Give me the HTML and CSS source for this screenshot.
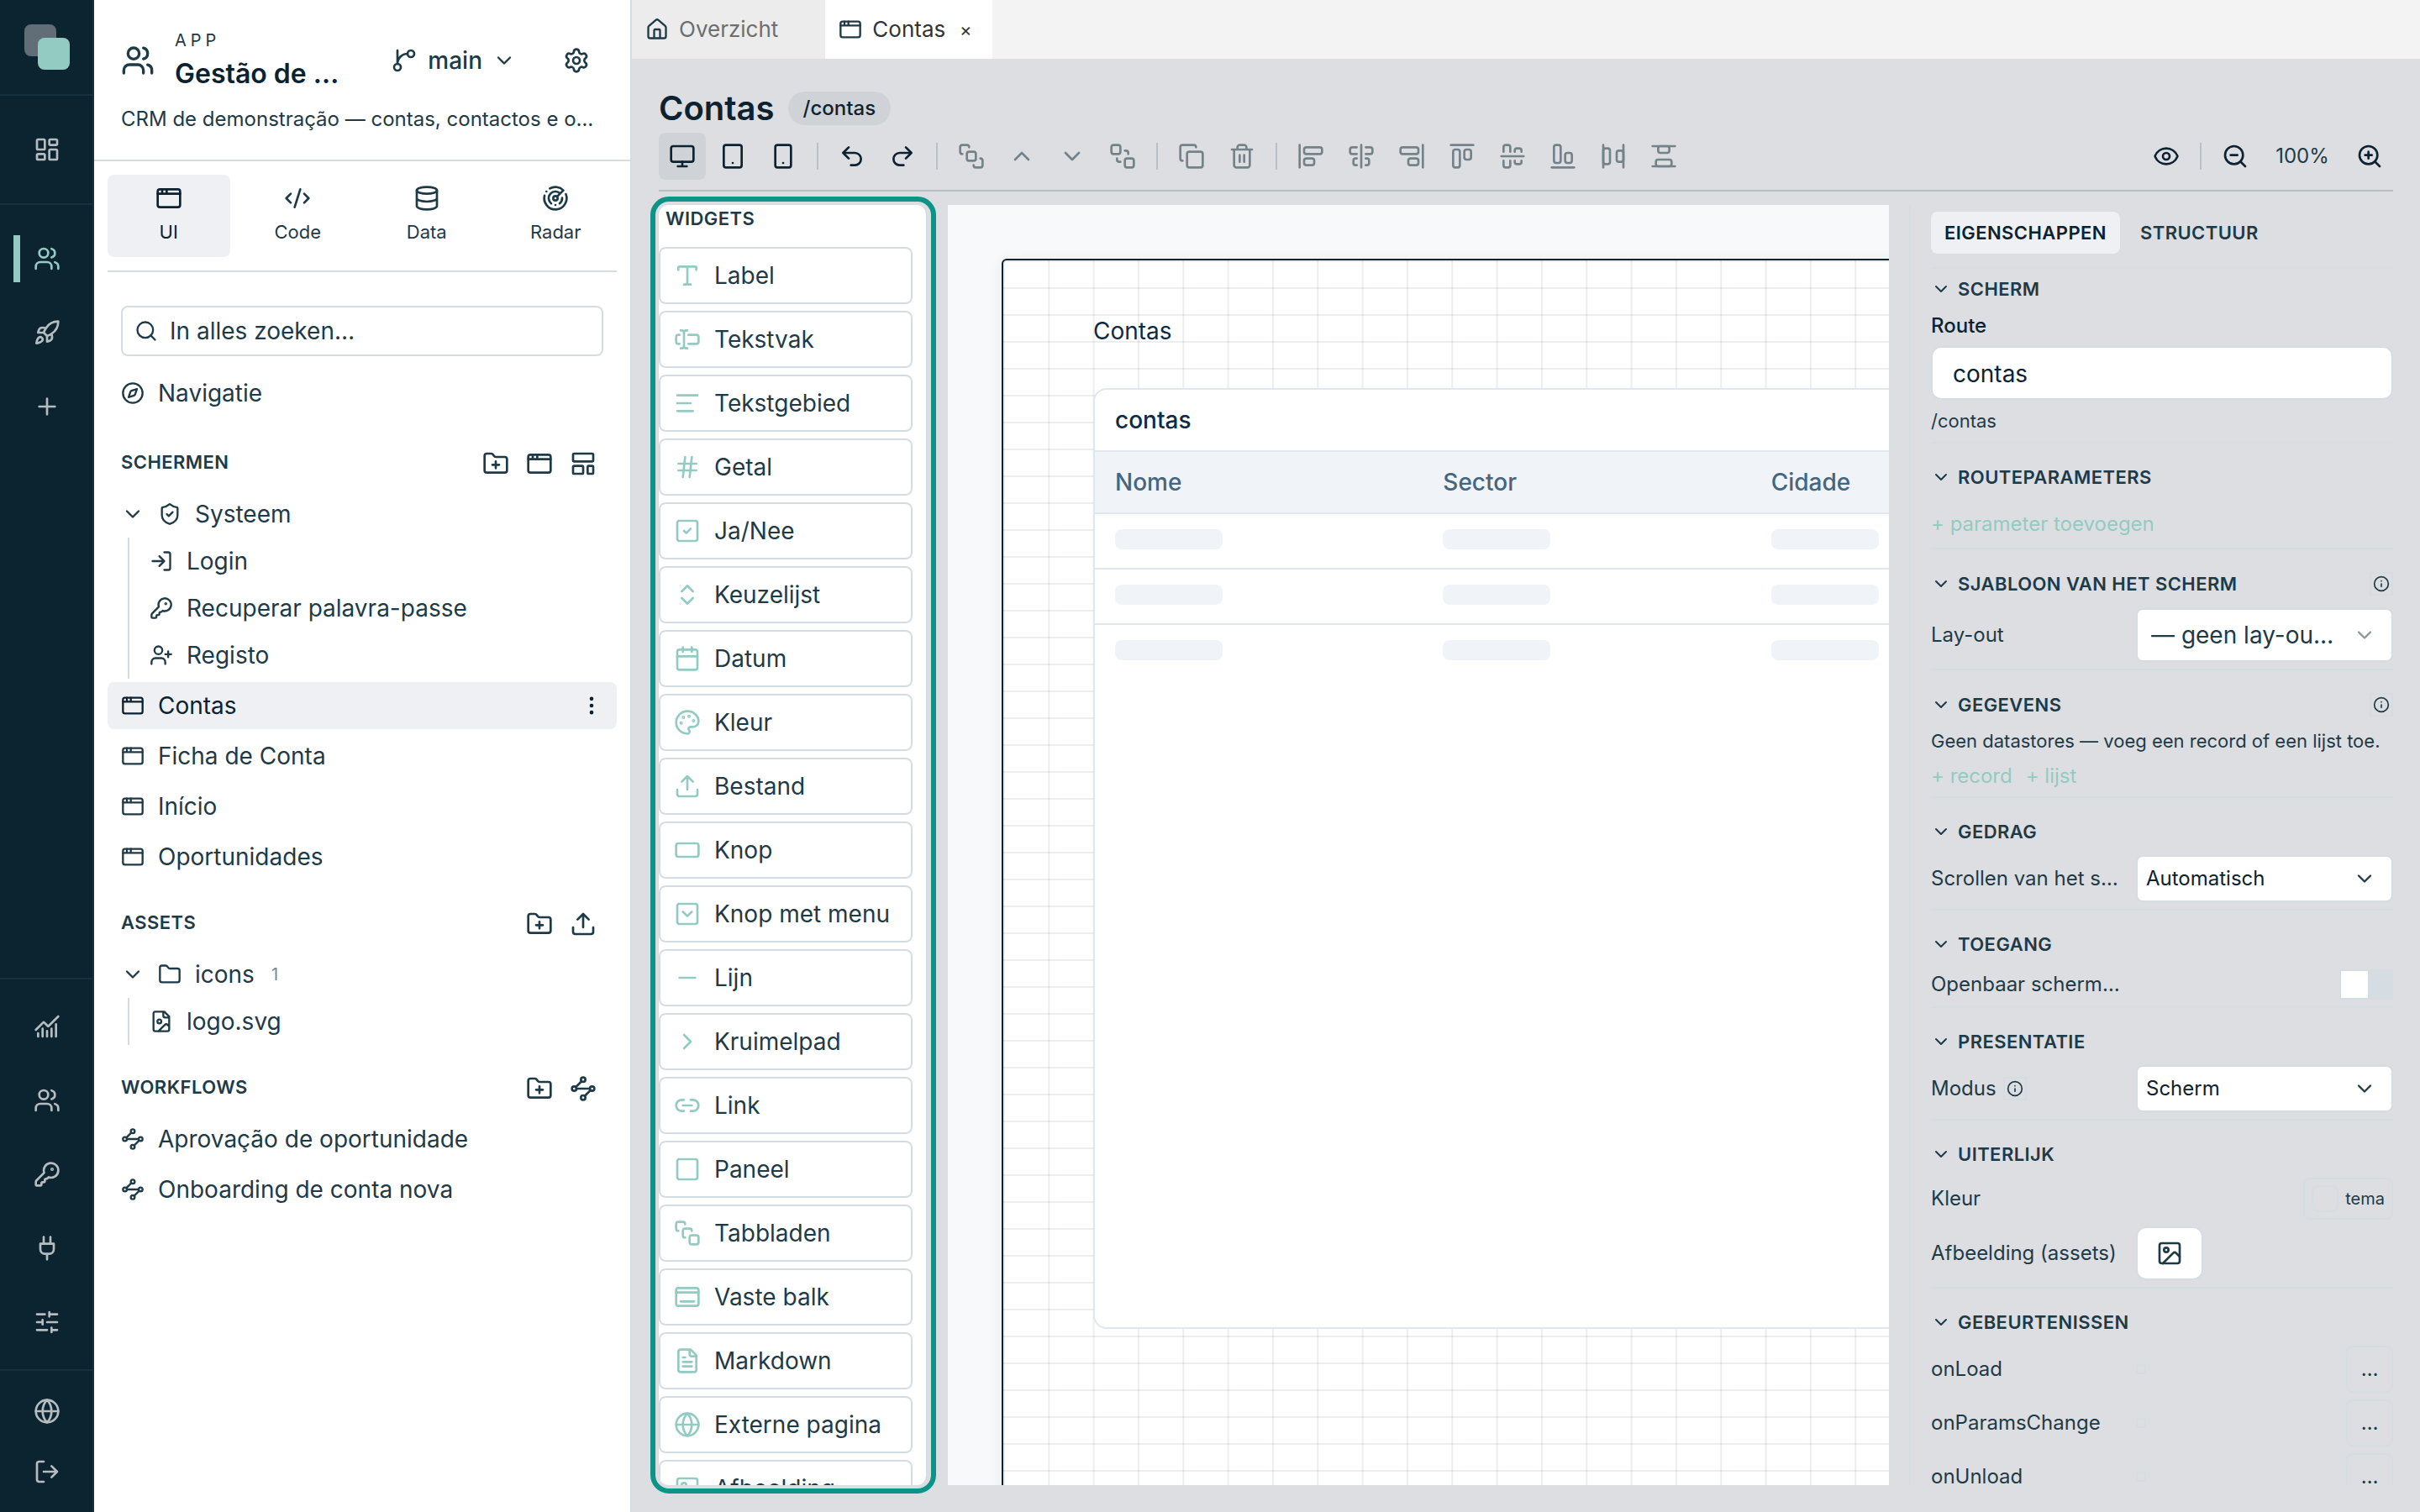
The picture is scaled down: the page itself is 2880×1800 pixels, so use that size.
FILE: index.html
```html
<!DOCTYPE html>
<html lang="nl">
<head>
<meta charset="UTF-8">
<meta name="viewport" content="width=device-width, initial-scale=1.0">
<title>Contas</title>
<link rel="stylesheet" href="styles.css">
</head>
<body>
<svg class="sprite" aria-hidden="true">
    <symbol id="i-dashboard" viewBox="0 0 24 24"><rect x="3" y="3" width="7" height="9" rx="1"/><rect x="14" y="3" width="7" height="5" rx="1"/><rect x="14" y="12" width="7" height="9" rx="1"/><rect x="3" y="16" width="7" height="5" rx="1"/></symbol>
    <symbol id="i-users" viewBox="0 0 24 24"><path d="M16 21v-2a4 4 0 0 0-4-4H6a4 4 0 0 0-4 4v2M16 3.128a4 4 0 0 1 0 7.744M22 21v-2a4 4 0 0 0-3-3.87"/><circle cx="9" cy="7" r="4"/></symbol>
    <symbol id="i-rocket" viewBox="0 0 24 24"><path d="M12 15v5s3.03-.55 4-2c1.08-1.62 0-5 0-5M4.5 16.5c-1.5 1.26-2 5-2 5s3.74-.5 5-2c.71-.84.7-2.13-.09-2.91a2.18 2.18 0 0 0-2.91-.09M9 12a22 22 0 0 1 2-3.95A12.88 12.88 0 0 1 22 2c0 2.72-.78 7.5-6 11a22.4 22.4 0 0 1-4 2zM9 12H4s.55-3.03 2-4c1.62-1.08 5 .05 5 .05"/></symbol>
    <symbol id="i-plus" viewBox="0 0 24 24"><path d="M5 12h14M12 5v14"/></symbol>
    <symbol id="i-chart" viewBox="0 0 24 24"><path d="M12 16v5M16 14v7M20 10v11M22 3l-8.646 8.646a.5.5 0 0 1-.708 0L9.354 8.354a.5.5 0 0 0-.707 0L2 15M4 18v3M8 14v7"/></symbol>
    <symbol id="i-key" viewBox="0 0 24 24"><path d="M2.586 17.414A2 2 0 0 0 2 18.828V21a1 1 0 0 0 1 1h3a1 1 0 0 0 1-1v-1a1 1 0 0 1 1-1h1a1 1 0 0 0 1-1v-1a1 1 0 0 1 1-1h.172a2 2 0 0 0 1.414-.586l.814-.814a6.5 6.5 0 1 0-4-4z"/><circle cx="16.5" cy="7.5" r=".5" fill="currentColor"/></symbol>
    <symbol id="i-plug" viewBox="0 0 24 24"><path d="M12 22v-5M9 8V2M15 8V2M18 8v5a4 4 0 0 1-4 4h-4a4 4 0 0 1-4-4V8Z"/></symbol>
    <symbol id="i-sliders" viewBox="0 0 24 24"><path d="M10 5H3M12 19H3M14 3v4M16 17v4M21 12h-9M21 19h-5M21 5h-7M8 10v4M8 12H3"/></symbol>
    <symbol id="i-globe" viewBox="0 0 24 24"><circle cx="12" cy="12" r="10"/><path d="M12 2a14.5 14.5 0 0 0 0 20 14.5 14.5 0 0 0 0-20M2 12h20"/></symbol>
    <symbol id="i-logout" viewBox="0 0 24 24"><path d="m16 17 5-5-5-5M21 12H9M9 21H5a2 2 0 0 1-2-2V5a2 2 0 0 1 2-2h4"/></symbol>
    <symbol id="i-login" viewBox="0 0 24 24"><path d="m10 17 5-5-5-5M15 12H3M15 3h4a2 2 0 0 1 2 2v14a2 2 0 0 1-2 2h-4"/></symbol>
    <symbol id="i-branch" viewBox="0 0 24 24"><path d="M15 6a9 9 0 0 0-9 9V3"/><circle cx="18" cy="6" r="3"/><circle cx="6" cy="18" r="3"/></symbol>
    <symbol id="i-down" viewBox="0 0 24 24"><path d="m6 9 6 6 6-6"/></symbol>
    <symbol id="i-up" viewBox="0 0 24 24"><path d="m18 15-6-6-6 6"/></symbol>
    <symbol id="i-right" viewBox="0 0 24 24"><path d="m9 18 6-6-6-6"/></symbol>
    <symbol id="i-settings" viewBox="0 0 24 24"><path d="M9.671 4.136a2.34 2.34 0 0 1 4.659 0 2.34 2.34 0 0 0 3.319 1.915 2.34 2.34 0 0 1 2.33 4.033 2.34 2.34 0 0 0 0 3.831 2.34 2.34 0 0 1-2.33 4.033 2.34 2.34 0 0 0-3.319 1.915 2.34 2.34 0 0 1-4.659 0 2.34 2.34 0 0 0-3.32-1.915 2.34 2.34 0 0 1-2.33-4.033 2.34 2.34 0 0 0 0-3.831A2.34 2.34 0 0 1 6.35 6.051a2.34 2.34 0 0 0 3.319-1.915"/><circle cx="12" cy="12" r="3"/></symbol>
    <symbol id="i-window" viewBox="0 0 24 24"><rect x="2" y="4" width="20" height="16" rx="2"/><path d="M10 4v4M2 8h20M6 4v4"/></symbol>
    <symbol id="i-code" viewBox="0 0 24 24"><path d="m18 16 4-4-4-4M6 8l-4 4 4 4M14.5 4l-5 16"/></symbol>
    <symbol id="i-database" viewBox="0 0 24 24"><ellipse cx="12" cy="5" rx="9" ry="3"/><path d="M3 5V19A9 3 0 0 0 21 19V5M3 12A9 3 0 0 0 21 12"/></symbol>
    <symbol id="i-radar" viewBox="0 0 24 24"><path d="M19.07 4.93A10 10 0 0 0 6.99 3.34M4 6h.01M2.29 9.62A10 10 0 1 0 21.31 8.35M16.24 7.76A6 6 0 1 0 8.23 16.67M12 18h.01M17.99 11.66A6 6 0 0 1 15.77 16.67M13.41 10.59l5.66-5.66"/><circle cx="12" cy="12" r="2"/></symbol>
    <symbol id="i-search" viewBox="0 0 24 24"><circle cx="11" cy="11" r="8"/><path d="m21 21-4.34-4.34"/></symbol>
    <symbol id="i-compass" viewBox="0 0 24 24"><path d="m16.24 7.76-1.804 5.411a2 2 0 0 1-1.265 1.265L7.76 16.24l1.804-5.411a2 2 0 0 1 1.265-1.265z"/><circle cx="12" cy="12" r="10"/></symbol>
    <symbol id="i-folder" viewBox="0 0 24 24"><path d="M20 20a2 2 0 0 0 2-2V8a2 2 0 0 0-2-2h-7.9a2 2 0 0 1-1.69-.9L9.6 3.9A2 2 0 0 0 7.93 3H4a2 2 0 0 0-2 2v13a2 2 0 0 0 2 2Z"/></symbol>
    <symbol id="i-folder-plus" viewBox="0 0 24 24"><path d="M12 10v6M9 13h6M20 20a2 2 0 0 0 2-2V8a2 2 0 0 0-2-2h-7.9a2 2 0 0 1-1.69-.9L9.6 3.9A2 2 0 0 0 7.93 3H4a2 2 0 0 0-2 2v13a2 2 0 0 0 2 2Z"/></symbol>
    <symbol id="i-template" viewBox="0 0 24 24"><rect x="3" y="3" width="18" height="7" rx="1"/><rect x="3" y="14" width="9" height="7" rx="1"/><rect x="16" y="14" width="5" height="7" rx="1"/></symbol>
    <symbol id="i-shield" viewBox="0 0 24 24"><path d="M20 13c0 5-3.5 7.5-7.66 8.95a1 1 0 0 1-.67-.01C7.5 20.5 4 18 4 13V6a1 1 0 0 1 1-1c2 0 4.5-1.2 6.24-2.72a1.17 1.17 0 0 1 1.52 0C14.51 3.81 17 5 19 5a1 1 0 0 1 1 1zM9 12l2 2 4-4"/></symbol>
    <symbol id="i-user-plus" viewBox="0 0 24 24"><path d="M16 21v-2a4 4 0 0 0-4-4H6a4 4 0 0 0-4 4v2M19 8v6M22 11h-6"/><circle cx="9" cy="7" r="4"/></symbol>
    <symbol id="i-dots" viewBox="0 0 24 24"><g fill="currentColor"><circle cx="12" cy="12" r="1"/><circle cx="12" cy="5" r="1"/><circle cx="12" cy="19" r="1"/></g></symbol>
    <symbol id="i-file-image" viewBox="0 0 24 24"><path d="M15 2H6a2 2 0 0 0-2 2v16a2 2 0 0 0 2 2h12a2 2 0 0 0 2-2V7ZM14 2v4a2 2 0 0 0 2 2h4M20 17l-1.296-1.296a2.41 2.41 0 0 0-3.408 0L9 22"/><circle cx="10" cy="12" r="2"/></symbol>
    <symbol id="i-upload" viewBox="0 0 24 24"><path d="M12 3v12M17 8l-5-5-5 5M21 15v4a2 2 0 0 1-2 2H5a2 2 0 0 1-2-2v-4"/></symbol>
    <symbol id="i-flow" viewBox="0 0 24 24"><circle cx="12" cy="4" r="2"/><circle cx="4" cy="12" r="2"/><circle cx="20" cy="12" r="2"/><circle cx="12" cy="20" r="2"/><path d="m10.586 5.414-5.172 5.172M18.586 13.414l-5.172 5.172M6 12h12"/></symbol>
    <symbol id="i-home" viewBox="0 0 24 24"><path d="M15 21v-8a1 1 0 0 0-1-1h-4a1 1 0 0 0-1 1v8M3 10a2 2 0 0 1 .709-1.528l7-6a2 2 0 0 1 2.582 0l7 6A2 2 0 0 1 21 10v9a2 2 0 0 1-2 2H5a2 2 0 0 1-2-2z"/></symbol>
    <symbol id="i-monitor" viewBox="0 0 24 24"><rect x="2" y="3" width="20" height="14" rx="2"/><path d="M8 21h8M12 17v4"/></symbol>
    <symbol id="i-tablet" viewBox="0 0 24 24"><rect x="4" y="2" width="16" height="20" rx="2"/><path d="M12 18h.01"/></symbol>
    <symbol id="i-phone" viewBox="0 0 24 24"><rect x="5" y="2" width="14" height="20" rx="2"/><path d="M12 18h.01"/></symbol>
    <symbol id="i-undo" viewBox="0 0 24 24"><path d="M9 14 4 9l5-5M4 9h10.5a5.5 5.5 0 0 1 5.5 5.5a5.5 5.5 0 0 1-5.5 5.5H11"/></symbol>
    <symbol id="i-redo" viewBox="0 0 24 24"><path d="m15 14 5-5-5-5M20 9H9.5A5.5 5.5 0 0 0 4 14.5A5.5 5.5 0 0 0 9.5 20H13"/></symbol>
    <symbol id="i-front" viewBox="0 0 24 24"><rect x="8" y="8" width="8" height="8" rx="2"/><path d="M4 10a2 2 0 0 1-2-2V4a2 2 0 0 1 2-2h4a2 2 0 0 1 2 2M14 20a2 2 0 0 0 2 2h4a2 2 0 0 0 2-2v-4a2 2 0 0 0-2-2"/></symbol>
    <symbol id="i-back" viewBox="0 0 24 24"><rect x="14" y="14" width="8" height="8" rx="2"/><rect x="2" y="2" width="8" height="8" rx="2"/><path d="M7 14v1a2 2 0 0 0 2 2h1M14 7h1a2 2 0 0 1 2 2v1"/></symbol>
    <symbol id="i-copy" viewBox="0 0 24 24"><rect x="8" y="8" width="14" height="14" rx="2"/><path d="M4 16c-1.1 0-2-.9-2-2V4c0-1.1.9-2 2-2h10c1.1 0 2 .9 2 2"/></symbol>
    <symbol id="i-trash" viewBox="0 0 24 24"><path d="M3 6h18M19 6v14c0 1-1 2-2 2H7c-1 0-2-1-2-2V6M8 6V4c0-1 1-2 2-2h4c1 0 2 1 2 2v2M10 11v6M14 11v6"/></symbol>
    <symbol id="i-al-left" viewBox="0 0 24 24"><rect x="6" y="14" width="9" height="6" rx="2"/><rect x="6" y="4" width="16" height="6" rx="2"/><path d="M2 2v20"/></symbol>
    <symbol id="i-al-center" viewBox="0 0 24 24"><path d="M12 2v20M8 10H4a2 2 0 0 1-2-2V6c0-1.1.9-2 2-2h4M16 10h4a2 2 0 0 0 2-2V6a2 2 0 0 0-2-2h-4M8 20H7a2 2 0 0 1-2-2v-2c0-1.1.9-2 2-2h1M16 14h1a2 2 0 0 1 2 2v2a2 2 0 0 1-2 2h-1"/></symbol>
    <symbol id="i-al-right" viewBox="0 0 24 24"><rect x="2" y="4" width="16" height="6" rx="2"/><rect x="9" y="14" width="9" height="6" rx="2"/><path d="M22 22V2"/></symbol>
    <symbol id="i-al-top" viewBox="0 0 24 24"><rect x="4" y="6" width="6" height="16" rx="2"/><rect x="14" y="6" width="6" height="9" rx="2"/><path d="M22 2H2"/></symbol>
    <symbol id="i-al-middle" viewBox="0 0 24 24"><path d="M2 12h20M10 16v4a2 2 0 0 1-2 2H6a2 2 0 0 1-2-2v-4M10 8V4a2 2 0 0 0-2-2H6a2 2 0 0 0-2 2v4M20 16v1a2 2 0 0 1-2 2h-2a2 2 0 0 1-2-2v-1M14 8V7c0-1.1.9-2 2-2h2a2 2 0 0 1 2 2v1"/></symbol>
    <symbol id="i-al-bottom" viewBox="0 0 24 24"><rect x="4" y="2" width="6" height="16" rx="2"/><rect x="14" y="9" width="6" height="9" rx="2"/><path d="M22 22H2"/></symbol>
    <symbol id="i-space-h" viewBox="0 0 24 24"><rect x="3" y="5" width="6" height="14" rx="2"/><rect x="15" y="7" width="6" height="10" rx="2"/><path d="M3 2v20M21 2v20"/></symbol>
    <symbol id="i-space-v" viewBox="0 0 24 24"><rect x="5" y="15" width="14" height="6" rx="2"/><rect x="7" y="3" width="10" height="6" rx="2"/><path d="M2 21h20M2 3h20"/></symbol>
    <symbol id="i-eye" viewBox="0 0 24 24"><path d="M2.062 12.348a1 1 0 0 1 0-.696 10.75 10.75 0 0 1 19.876 0 1 1 0 0 1 0 .696 10.75 10.75 0 0 1-19.876 0"/><circle cx="12" cy="12" r="3"/></symbol>
    <symbol id="i-zoom-out" viewBox="0 0 24 24"><circle cx="11" cy="11" r="8"/><path d="m21 21-4.35-4.35M8 11h6"/></symbol>
    <symbol id="i-zoom-in" viewBox="0 0 24 24"><circle cx="11" cy="11" r="8"/><path d="m21 21-4.35-4.35M8 11h6M11 8v6"/></symbol>
    <symbol id="i-info" viewBox="0 0 24 24"><circle cx="12" cy="12" r="10"/><path d="M12 16v-4M12 8h.01"/></symbol>
    <symbol id="i-image" viewBox="0 0 24 24"><rect x="3" y="3" width="18" height="18" rx="2"/><circle cx="9" cy="9" r="2"/><path d="m21 15-3.086-3.086a2 2 0 0 0-2.828 0L6 21"/></symbol>
    <symbol id="i-type" viewBox="0 0 24 24"><path d="M12 4v16M4 7V5a1 1 0 0 1 1-1h14a1 1 0 0 1 1 1v2M9 20h6"/></symbol>
    <symbol id="i-input" viewBox="0 0 24 24"><path d="M12 20h-1a2 2 0 0 1-2-2 2 2 0 0 1-2 2H6M13 8h7a2 2 0 0 1 2 2v4a2 2 0 0 1-2 2h-7M5 16H4a2 2 0 0 1-2-2v-4a2 2 0 0 1 2-2h1M6 4h1a2 2 0 0 1 2 2 2 2 0 0 1 2-2h1M9 6v12"/></symbol>
    <symbol id="i-lines" viewBox="0 0 24 24"><path d="M21 5H3M15 12H3M17 19H3"/></symbol>
    <symbol id="i-hash" viewBox="0 0 24 24"><path d="M4 9h16M4 15h16M10 3 8 21M16 3l-2 18"/></symbol>
    <symbol id="i-check" viewBox="0 0 24 24"><rect x="3" y="3" width="18" height="18" rx="2"/><path d="m9 12 2 2 4-4"/></symbol>
    <symbol id="i-updown" viewBox="0 0 24 24"><path d="m7 15 5 5 5-5M7 9l5-5 5 5"/></symbol>
    <symbol id="i-calendar" viewBox="0 0 24 24"><path d="M8 2v4M16 2v4M3 10h18"/><rect x="3" y="4" width="18" height="18" rx="2"/></symbol>
    <symbol id="i-palette" viewBox="0 0 24 24"><path d="M12 22a1 1 0 0 1 0-20 10 9 0 0 1 10 9 5 5 0 0 1-5 5h-2.25a1.75 1.75 0 0 0-1.4 2.8l.3.4a1.75 1.75 0 0 1-1.4 2.8z"/><g fill="currentColor"><circle cx="13.5" cy="6.5" r=".5"/><circle cx="17.5" cy="10.5" r=".5"/><circle cx="6.5" cy="12.5" r=".5"/><circle cx="8.5" cy="7.5" r=".5"/></g></symbol>
    <symbol id="i-button" viewBox="0 0 24 24"><rect x="2" y="6" width="20" height="12" rx="2"/></symbol>
    <symbol id="i-menu-button" viewBox="0 0 24 24"><rect x="3" y="3" width="18" height="18" rx="2"/><path d="m16 10-4 4-4-4"/></symbol>
    <symbol id="i-minus" viewBox="0 0 24 24"><path d="M5 12h14"/></symbol>
    <symbol id="i-link" viewBox="0 0 24 24"><path d="M9 17H7A5 5 0 0 1 7 7h2M15 7h2a5 5 0 1 1 0 10h-2M8 12h8"/></symbol>
    <symbol id="i-square" viewBox="0 0 24 24"><rect x="3" y="3" width="18" height="18" rx="2"/></symbol>
    <symbol id="i-stack" viewBox="0 0 24 24"><path d="M4 10c-1.1 0-2-.9-2-2V4c0-1.1.9-2 2-2h4c1.1 0 2 .9 2 2M10 16c-1.1 0-2-.9-2-2v-4c0-1.1.9-2 2-2h4c1.1 0 2 .9 2 2"/><rect x="14" y="14" width="8" height="8" rx="2"/></symbol>
    <symbol id="i-dock" viewBox="0 0 24 24"><rect x="2" y="4" width="20" height="16" rx="2"/><path d="M2 8h20M6 16h12"/></symbol>
    <symbol id="i-file-text" viewBox="0 0 24 24"><path d="M15 2H6a2 2 0 0 0-2 2v16a2 2 0 0 0 2 2h12a2 2 0 0 0 2-2V7ZM14 2v4a2 2 0 0 0 2 2h4M10 9H8M16 13H8M16 17H8"/></symbol>
</svg>

<div class="app">
    <nav class="rail" aria-label="Apps">
        <a class="logo" href="#" aria-label="Start">
            <svg viewBox="0 0 54 54"><rect width="38" height="38" rx="8" fill="#616e77"/><rect x="16" y="16" width="38" height="38" rx="8" fill="#93cbc3"/></svg>
        </a>
        <div class="rail-group rail-home">
            <button class="rail-btn" aria-label="Dashboard"><svg class="icon"><use href="#i-dashboard"/></svg></button>
        </div>
        <div class="rail-group rail-apps">
            <button class="rail-btn active" aria-label="Gestão de contas"><svg class="icon"><use href="#i-users"/></svg></button>
            <button class="rail-btn" aria-label="Lanceren"><svg class="icon"><use href="#i-rocket"/></svg></button>
            <button class="rail-btn" aria-label="Nieuwe app"><svg class="icon"><use href="#i-plus"/></svg></button>
        </div>
        <div class="rail-group rail-admin">
            <button class="rail-btn" aria-label="Statistieken"><svg class="icon"><use href="#i-chart"/></svg></button>
            <button class="rail-btn" aria-label="Gebruikers"><svg class="icon"><use href="#i-users"/></svg></button>
            <button class="rail-btn" aria-label="Sleutels"><svg class="icon"><use href="#i-key"/></svg></button>
            <button class="rail-btn" aria-label="Koppelingen"><svg class="icon"><use href="#i-plug"/></svg></button>
            <button class="rail-btn" aria-label="Instellingen"><svg class="icon"><use href="#i-sliders"/></svg></button>
        </div>
        <div class="rail-group rail-session">
            <button class="rail-btn" aria-label="Taal"><svg class="icon"><use href="#i-globe"/></svg></button>
            <button class="rail-btn" aria-label="Afmelden"><svg class="icon"><use href="#i-logout"/></svg></button>
        </div>
    </nav>

    <aside class="sidebar">
        <header class="side-header">
            <div class="side-title">
                <svg class="icon icon-lg"><use href="#i-users"/></svg>
                <div class="side-name">
                    <span class="eyebrow">APP</span>
                    <h2>Gestão de …</h2>
                </div>
                <button class="branch"><svg class="icon"><use href="#i-branch"/></svg>main<svg class="icon icon-sm"><use href="#i-down"/></svg></button>
                <button class="icon-btn" aria-label="Instellingen"><svg class="icon"><use href="#i-settings"/></svg></button>
            </div>
            <p class="side-desc">CRM de demonstração — contas, contactos e o…</p>
        </header>

        <div class="side-body">
            <div class="modes">
                <button class="mode active"><svg class="icon"><use href="#i-window"/></svg>UI</button>
                <button class="mode"><svg class="icon"><use href="#i-code"/></svg>Code</button>
                <button class="mode"><svg class="icon"><use href="#i-database"/></svg>Data</button>
                <button class="mode"><svg class="icon"><use href="#i-radar"/></svg>Radar</button>
            </div>

            <div class="search">
                <svg class="icon icon-sm"><use href="#i-search"/></svg>
                <input type="search" placeholder="In alles zoeken…" aria-label="In alles zoeken">
            </div>

            <div class="tree">
                <a class="row" href="#"><svg class="icon icon-sm"><use href="#i-compass"/></svg>Navigatie</a>
            </div>

            <div class="section-head section-first">
                <h3>SCHERMEN</h3>
                <button aria-label="Nieuwe map"><svg class="icon"><use href="#i-folder-plus"/></svg></button>
                <button aria-label="Nieuw scherm"><svg class="icon"><use href="#i-window"/></svg></button>
                <button aria-label="Nieuwe lay-out"><svg class="icon"><use href="#i-template"/></svg></button>
            </div>
            <div class="tree">
                <div>
                    <a class="row folder" href="#"><svg class="icon icon-sm"><use href="#i-down"/></svg><svg class="icon icon-sm"><use href="#i-shield"/></svg>Systeem</a>
                    <div class="children">
                        <a class="row" href="#"><svg class="icon icon-sm"><use href="#i-login"/></svg>Login</a>
                        <a class="row" href="#"><svg class="icon icon-sm"><use href="#i-key"/></svg>Recuperar palavra-passe</a>
                        <a class="row" href="#"><svg class="icon icon-sm"><use href="#i-user-plus"/></svg>Registo</a>
                    </div>
                </div>
                <div class="row active"><a href="#"><svg class="icon icon-sm"><use href="#i-window"/></svg>Contas</a><button aria-label="Meer"><svg class="icon icon-sm"><use href="#i-dots"/></svg></button></div>
                <a class="row" href="#"><svg class="icon icon-sm"><use href="#i-window"/></svg>Ficha de Conta</a>
                <a class="row" href="#"><svg class="icon icon-sm"><use href="#i-window"/></svg>Início</a>
                <a class="row" href="#"><svg class="icon icon-sm"><use href="#i-window"/></svg>Oportunidades</a>
            </div>

            <div class="section-head">
                <h3>ASSETS</h3>
                <button aria-label="Nieuwe map"><svg class="icon"><use href="#i-folder-plus"/></svg></button>
                <button aria-label="Uploaden"><svg class="icon"><use href="#i-upload"/></svg></button>
            </div>
            <div class="tree">
                <div>
                    <a class="row folder" href="#"><svg class="icon icon-sm"><use href="#i-down"/></svg><svg class="icon icon-sm"><use href="#i-folder"/></svg>icons<span class="count">1</span></a>
                    <div class="children">
                        <a class="row" href="#"><svg class="icon icon-sm"><use href="#i-file-image"/></svg>logo.svg</a>
                    </div>
                </div>
            </div>

            <div class="section-head">
                <h3>WORKFLOWS</h3>
                <button aria-label="Nieuwe map"><svg class="icon"><use href="#i-folder-plus"/></svg></button>
                <button aria-label="Nieuwe workflow"><svg class="icon"><use href="#i-flow"/></svg></button>
            </div>
            <div class="tree">
                <a class="row" href="#"><svg class="icon icon-sm"><use href="#i-flow"/></svg>Aprovação de oportunidade</a>
                <a class="row" href="#"><svg class="icon icon-sm"><use href="#i-flow"/></svg>Onboarding de conta nova</a>
            </div>
        </div>
    </aside>

    <main class="main">
        <div class="tabs">
            <a class="tab" href="#"><svg class="icon icon-sm"><use href="#i-home"/></svg>Overzicht</a>
            <div class="tab active"><svg class="icon icon-sm"><use href="#i-window"/></svg>Contas<button class="tab-close" aria-label="Sluiten">×</button></div>
        </div>

        <div class="editor">
            <div class="editor-title">
                <h1>Contas</h1>
                <span class="badge">/contas</span>
            </div>

            <div class="toolbar">
                <button class="tool active" aria-label="Desktop"><svg class="icon"><use href="#i-monitor"/></svg></button>
                <button class="tool" aria-label="Tablet"><svg class="icon"><use href="#i-tablet"/></svg></button>
                <button class="tool" aria-label="Telefoon"><svg class="icon"><use href="#i-phone"/></svg></button>
                <span class="sep"></span>
                <button class="tool" aria-label="Ongedaan maken"><svg class="icon"><use href="#i-undo"/></svg></button>
                <button class="tool" aria-label="Opnieuw"><svg class="icon"><use href="#i-redo"/></svg></button>
                <span class="sep"></span>
                <button class="tool" disabled aria-label="Naar voorgrond"><svg class="icon"><use href="#i-front"/></svg></button>
                <button class="tool" disabled aria-label="Omhoog"><svg class="icon"><use href="#i-up"/></svg></button>
                <button class="tool" disabled aria-label="Omlaag"><svg class="icon"><use href="#i-down"/></svg></button>
                <button class="tool" disabled aria-label="Naar achtergrond"><svg class="icon"><use href="#i-back"/></svg></button>
                <span class="sep"></span>
                <button class="tool" disabled aria-label="Dupliceren"><svg class="icon"><use href="#i-copy"/></svg></button>
                <button class="tool" disabled aria-label="Verwijderen"><svg class="icon"><use href="#i-trash"/></svg></button>
                <span class="sep"></span>
                <button class="tool" disabled aria-label="Links uitlijnen"><svg class="icon"><use href="#i-al-left"/></svg></button>
                <button class="tool" disabled aria-label="Horizontaal centreren"><svg class="icon"><use href="#i-al-center"/></svg></button>
                <button class="tool" disabled aria-label="Rechts uitlijnen"><svg class="icon"><use href="#i-al-right"/></svg></button>
                <button class="tool" disabled aria-label="Boven uitlijnen"><svg class="icon"><use href="#i-al-top"/></svg></button>
                <button class="tool" disabled aria-label="Verticaal centreren"><svg class="icon"><use href="#i-al-middle"/></svg></button>
                <button class="tool" disabled aria-label="Onder uitlijnen"><svg class="icon"><use href="#i-al-bottom"/></svg></button>
                <button class="tool" disabled aria-label="Horizontaal verdelen"><svg class="icon"><use href="#i-space-h"/></svg></button>
                <button class="tool" disabled aria-label="Verticaal verdelen"><svg class="icon"><use href="#i-space-v"/></svg></button>
                <button class="tool tool-eye" aria-label="Voorbeeld"><svg class="icon"><use href="#i-eye"/></svg></button>
                <span class="sep"></span>
                <button class="tool" aria-label="Uitzoomen"><svg class="icon"><use href="#i-zoom-out"/></svg></button>
                <span class="zoom">100%</span>
                <button class="tool" aria-label="Inzoomen"><svg class="icon"><use href="#i-zoom-in"/></svg></button>
            </div>

            <div class="workspace">
                <section class="widgets">
                    <h3>WIDGETS</h3>
                    <div class="widget-list">
                        <button class="widget"><svg class="icon"><use href="#i-type"/></svg>Label</button>
                        <button class="widget"><svg class="icon"><use href="#i-input"/></svg>Tekstvak</button>
                        <button class="widget"><svg class="icon"><use href="#i-lines"/></svg>Tekstgebied</button>
                        <button class="widget"><svg class="icon"><use href="#i-hash"/></svg>Getal</button>
                        <button class="widget"><svg class="icon"><use href="#i-check"/></svg>Ja/Nee</button>
                        <button class="widget"><svg class="icon"><use href="#i-updown"/></svg>Keuzelijst</button>
                        <button class="widget"><svg class="icon"><use href="#i-calendar"/></svg>Datum</button>
                        <button class="widget"><svg class="icon"><use href="#i-palette"/></svg>Kleur</button>
                        <button class="widget"><svg class="icon"><use href="#i-upload"/></svg>Bestand</button>
                        <button class="widget"><svg class="icon"><use href="#i-button"/></svg>Knop</button>
                        <button class="widget"><svg class="icon"><use href="#i-menu-button"/></svg>Knop met menu</button>
                        <button class="widget"><svg class="icon"><use href="#i-minus"/></svg>Lijn</button>
                        <button class="widget"><svg class="icon"><use href="#i-right"/></svg>Kruimelpad</button>
                        <button class="widget"><svg class="icon"><use href="#i-link"/></svg>Link</button>
                        <button class="widget"><svg class="icon"><use href="#i-square"/></svg>Paneel</button>
                        <button class="widget"><svg class="icon"><use href="#i-stack"/></svg>Tabbladen</button>
                        <button class="widget"><svg class="icon"><use href="#i-dock"/></svg>Vaste balk</button>
                        <button class="widget"><svg class="icon"><use href="#i-file-text"/></svg>Markdown</button>
                        <button class="widget"><svg class="icon"><use href="#i-globe"/></svg>Externe pagina</button>
                        <button class="widget"><svg class="icon"><use href="#i-image"/></svg>Afbeelding</button>
                    </div>
                </section>

                <section class="canvas">
                    <div class="artboard">
                        <p class="canvas-label">Contas</p>
                        <div class="card">
                            <div class="card-title">contas</div>
                            <table class="data">
                                <thead>
                                    <tr><th>Nome</th><th>Sector</th><th>Cidade</th><th></th><th></th><th></th></tr>
                                </thead>
                                <tbody>
                                    <tr><td><i class="bone"></i></td><td><i class="bone"></i></td><td><i class="bone"></i></td><td></td><td></td><td></td></tr>
                                    <tr><td><i class="bone"></i></td><td><i class="bone"></i></td><td><i class="bone"></i></td><td></td><td></td><td></td></tr>
                                    <tr><td><i class="bone"></i></td><td><i class="bone"></i></td><td><i class="bone"></i></td><td></td><td></td><td></td></tr>
                                </tbody>
                            </table>
                        </div>
                    </div>
                </section>

                <aside class="props">
                    <div class="prop-tabs">
                        <button class="active">EIGENSCHAPPEN</button>
                        <button>STRUCTUUR</button>
                    </div>

                    <section class="group">
                        <h4><svg class="icon icon-xs"><use href="#i-down"/></svg>SCHERM</h4>
                        <label class="field-label" for="route">Route</label>
                        <input class="field-input" type="text" id="route" value="contas">
                        <p class="hint">/contas</p>
                    </section>

                    <section class="group">
                        <h4><svg class="icon icon-xs"><use href="#i-down"/></svg>ROUTEPARAMETERS</h4>
                        <div class="adders adders-solo"><button>+ parameter toevoegen</button></div>
                    </section>

                    <section class="group">
                        <h4 class="with-info"><svg class="icon icon-xs"><use href="#i-down"/></svg>SJABLOON VAN HET SCHERM<button class="info" aria-label="Info"><svg class="icon"><use href="#i-info"/></svg></button></h4>
                        <div class="field">
                            <label for="layout">Lay-out</label>
                            <div class="select select-lg">
                                <select id="layout"><option>— geen lay-ou…</option></select>
                                <svg class="icon icon-sm"><use href="#i-down"/></svg>
                            </div>
                        </div>
                    </section>

                    <section class="group">
                        <h4 class="with-info"><svg class="icon icon-xs"><use href="#i-down"/></svg>GEGEVENS<button class="info" aria-label="Info"><svg class="icon"><use href="#i-info"/></svg></button></h4>
                        <p class="note">Geen datastores — voeg een record of een lijst toe.</p>
                        <div class="adders"><button>+ record</button><button>+ lijst</button></div>
                    </section>

                    <section class="group">
                        <h4><svg class="icon icon-xs"><use href="#i-down"/></svg>GEDRAG</h4>
                        <div class="field">
                            <label for="scroll">Scrollen van het s…</label>
                            <div class="select">
                                <select id="scroll"><option>Automatisch</option></select>
                                <svg class="icon icon-sm"><use href="#i-down"/></svg>
                            </div>
                        </div>
                    </section>

                    <section class="group">
                        <h4><svg class="icon icon-xs"><use href="#i-down"/></svg>TOEGANG</h4>
                        <div class="field field-toggle">
                            <label for="public">Openbaar scherm…</label>
                            <input class="toggle" type="checkbox" id="public">
                        </div>
                    </section>

                    <section class="group">
                        <h4><svg class="icon icon-xs"><use href="#i-down"/></svg>PRESENTATIE</h4>
                        <div class="field">
                            <div class="label-info"><label for="mode">Modus</label><button class="info" aria-label="Info"><svg class="icon"><use href="#i-info"/></svg></button></div>
                            <div class="select">
                                <select id="mode"><option>Scherm</option></select>
                                <svg class="icon icon-sm"><use href="#i-down"/></svg>
                            </div>
                        </div>
                    </section>

                    <section class="group">
                        <h4><svg class="icon icon-xs"><use href="#i-down"/></svg>UITERLIJK</h4>
                        <div class="field">
                            <span>Kleur</span>
                            <button class="color"><i class="swatch"></i>tema</button>
                        </div>
                        <div class="field">
                            <span>Afbeelding (assets)</span>
                            <button class="asset" aria-label="Afbeelding kiezen"><svg class="icon"><use href="#i-image"/></svg></button>
                        </div>
                    </section>

                    <section class="group">
                        <h4><svg class="icon icon-xs"><use href="#i-down"/></svg>GEBEURTENISSEN</h4>
                        <div class="field"><span>onLoad</span><i class="mark"></i><button class="more">…</button></div>
                        <div class="field"><span>onParamsChange</span><i class="mark"></i><button class="more">…</button></div>
                        <div class="field"><span>onUnload</span><i class="mark"></i><button class="more">…</button></div>
                    </section>
                </aside>
            </div>
        </div>
    </main>
</div>
</body>
</html>
```

FILE: styles.css
```css
* {
    box-sizing: border-box;
}

body {
    margin: 0;
    font-family: Inter, "Liberation Sans", sans-serif;
    font-size: 28px;
    line-height: 40px;
    color: #1e3a47;
    background-color: #dddee2;
}

h1, h2, h3, h4, p {
    margin: 0;
}

a {
    color: inherit;
    text-decoration: none;
}

button, input, select {
    font: inherit;
    color: inherit;
}

button {
    padding: 0;
    border: 0;
    background: none;
    cursor: pointer;
}

.sprite {
    display: none;
}

.icon {
    display: block;
    flex: none;
    width: 32px;
    height: 32px;
    fill: none;
    stroke: currentColor;
    stroke-width: 2;
    stroke-linecap: round;
    stroke-linejoin: round;
}

.icon-xs {
    width: 24px;
    height: 24px;
}

.icon-sm {
    width: 28px;
    height: 28px;
}

.icon-lg {
    width: 40px;
    height: 40px;
}

.app {
    display: flex;
    height: 100vh;
    overflow: hidden;
}

/* left rail */
.rail {
    display: flex;
    flex-direction: column;
    flex: none;
    width: 112px;
    background-color: #0c242f;
    box-shadow: inset -2px 0 #17323e;
    color: #b6bdc1;
}

.logo {
    display: block;
    height: 112px;
    padding: 29px;
}

.logo svg {
    display: block;
    width: 54px;
    height: 54px;
}

.rail-group {
    display: flex;
    flex-direction: column;
    gap: 32px;
    border-top: 2px solid #17323e;
}

.rail-home {
    padding: 36px 0;
}

.rail-apps {
    flex: 1;
    padding: 36px 0;
}

.rail-admin {
    padding: 28px 0;
}

.rail-session {
    gap: 16px;
    padding: 20px 0;
}

.rail-btn {
    display: flex;
    align-items: center;
    justify-content: center;
    height: 56px;
    position: relative;
}

.rail-btn.active {
    color: #93cbc3;
}

.rail-btn.active::before {
    content: "";
    position: absolute;
    left: 16px;
    width: 8px;
    height: 56px;
    background-color: #93cbc3;
}

/* sidebar */
.sidebar {
    flex: none;
    width: 640px;
    background-color: #fff;
    border-right: 2px solid #d5dde3;
    overflow: hidden;
}

.side-header {
    padding: 36px 36px 30px 32px;
    border-bottom: 2px solid #d5dde3;
}

.side-title {
    display: flex;
    align-items: center;
}

.side-name {
    flex: 1;
    margin-left: 24px;
}

.eyebrow {
    display: block;
    font-size: 20px;
    line-height: 24px;
    letter-spacing: 5px;
    margin-bottom: 8px;
}

.side-name h2 {
    font-size: 32px;
    line-height: 40px;
    font-weight: 600;
    color: #0c2230;
}

.branch {
    display: flex;
    align-items: center;
    gap: 12px;
    padding: 0 20px;
    margin-right: 24px;
    font-weight: 500;
}

.icon-btn {
    display: flex;
    align-items: center;
    justify-content: center;
    width: 56px;
    height: 56px;
}

.side-desc {
    margin-top: 16px;
    font-size: 24px;
    line-height: 36px;
    white-space: nowrap;
}

.side-body {
    padding: 16px;
}

.modes {
    display: grid;
    grid-template-columns: repeat(4, 1fr);
    gap: 8px;
    padding-bottom: 16px;
    border-bottom: 2px solid #d5dde3;
}

.mode {
    display: flex;
    flex-direction: column;
    align-items: center;
    gap: 8px;
    padding: 12px 0 14px;
    border-radius: 8px;
    font-size: 22px;
    line-height: 32px;
}

.mode.active {
    background-color: #eff0f4;
    color: #0c2230;
}

.search {
    display: flex;
    align-items: center;
    gap: 14px;
    height: 60px;
    margin: 40px 16px 16px;
    padding: 0 14px;
    border: 2px solid #d5dde3;
    border-radius: 8px;
}

.search input {
    flex: 1;
    min-width: 0;
    padding: 0;
    border: 0;
    outline: 0;
    background: none;
}

.search input::placeholder {
    color: #1e3a47;
}

.tree {
    display: flex;
    flex-direction: column;
    gap: 4px;
}

.row {
    display: flex;
    align-items: center;
    gap: 16px;
    height: 56px;
    padding: 0 16px;
    border-radius: 8px;
}

.row a {
    display: flex;
    flex: 1;
    align-items: center;
    gap: 16px;
}

.row.active {
    background-color: #eff0f4;
    color: #0c2230;
}

.children {
    margin-left: 24px;
    border-left: 2px solid #d5dde3;
}

.children .row {
    padding-left: 24px;
}

.count {
    margin-left: 4px;
    font-size: 20px;
    line-height: 28px;
    color: #768892;
}

.section-head {
    display: flex;
    align-items: center;
    gap: 20px;
    height: 64px;
    margin-top: 20px;
    padding: 0 24px 0 16px;
}

.section-first {
    margin-top: 24px;
}

.section-head h3 {
    flex: 1;
    padding-bottom: 4px;
}

.section-head h3,
.widgets h3,
.group h4,
.prop-tabs button {
    font-size: 22px;
    line-height: 32px;
    font-weight: 600;
    letter-spacing: 0.02em;
}

/* document tabs */
.main {
    display: flex;
    flex-direction: column;
    flex: 1;
    min-width: 0;
}

.tabs {
    display: flex;
    height: 70px;
    background-color: #f3f3f3;
    font-size: 26px;
}

.tab {
    display: flex;
    align-items: center;
    gap: 12px;
    padding: 0 56px 0 16px;
    background-color: #ececec;
    color: #6e6e6e;
}

.tab .icon {
    color: #1e3a47;
}

.tab.active {
    padding-right: 20px;
    background-color: #fff;
    color: #333;
}

.tab-close {
    width: 24px;
    font-size: 22px;
}

/* editor */
.editor {
    display: flex;
    flex-direction: column;
    flex: 1;
    min-height: 0;
    padding: 34px 32px 32px;
}

.editor-title {
    display: flex;
    align-items: center;
    gap: 16px;
    height: 50px;
    margin-bottom: 4px;
    color: #0c2230;
}

.editor-title h1 {
    font-size: 40px;
    line-height: 48px;
    font-weight: 600;
}

.badge {
    padding: 0 18px;
    border-radius: 20px;
    background-color: #cfd3d8;
    font-size: 24px;
    font-weight: 500;
}

.toolbar {
    display: flex;
    align-items: center;
    gap: 4px;
    padding-bottom: 12px;
    border-bottom: 2px solid #b7bfc7;
}

.tool {
    display: flex;
    align-items: center;
    justify-content: center;
    width: 56px;
    height: 56px;
    border-radius: 8px;
    color: #0c2230;
}

.tool.active {
    background-color: #cfd3d8;
}

.tool:disabled {
    color: #74828a;
}

.tool-eye {
    margin-left: auto;
}

.sep {
    width: 2px;
    height: 32px;
    margin: 0 8px;
    background-color: #b7bfc7;
}

.zoom {
    width: 96px;
    font-size: 24px;
    text-align: center;
}

.workspace {
    display: flex;
    flex: 1;
    gap: 24px;
    min-height: 0;
    padding-top: 16px;
}

/* widget palette */
.widgets {
    flex: none;
    width: 320px;
    padding-right: 16px;
    overflow: hidden;
    background-color: #fff;
    border-right: 2px solid #d5dde3;
    border-radius: 12px;
    outline: 6px solid #0d9488;
    outline-offset: 4px;
}

.widgets h3 {
    padding: 0 8px;
}

.widget-list {
    display: flex;
    flex-direction: column;
    gap: 8px;
    margin-top: 18px;
}

.widget {
    display: flex;
    align-items: center;
    flex: none;
    gap: 16px;
    height: 68px;
    padding: 0 16px;
    border: 2px solid #d5dde3;
    border-radius: 8px;
}

.widget .icon {
    color: #93cbc3;
}

/* canvas */
.canvas {
    flex: 1;
    min-width: 0;
    padding: 64px 0 0 64px;
    overflow: hidden;
    background-color: #f8f9fb;
}

.artboard {
    width: 2564px;
    height: 1800px;
    padding: 64px 107px;
    border: 2px solid #0c2230;
    border-radius: 6px;
    background-color: #fff;
    background-image:
        linear-gradient(to right, rgba(12, 34, 48, 0.08) 2px, transparent 2px),
        linear-gradient(to bottom, rgba(12, 34, 48, 0.08) 2px, transparent 2px);
    background-size: calc(100% / 48) 32px;
    box-shadow: 0 2px 16px rgba(12, 34, 48, 0.08);
}

.canvas-label {
    margin-bottom: 48px;
    color: #0f2a43;
}

.card {
    height: 1120px;
    overflow: hidden;
    border: 2px solid #e0e7f0;
    border-radius: 16px;
    background-color: #fff;
}

.card-title {
    padding: 16px 24px;
    border-bottom: 2px solid #e0e7f0;
    font-weight: 500;
    color: #0f2a43;
}

.data {
    width: 100%;
    table-layout: fixed;
    border-collapse: separate;
    border-spacing: 0;
}

.data th {
    padding: 16px 24px;
    border-bottom: 2px solid #e0e7f0;
    background-color: #f0f3f8;
    font-weight: 500;
    text-align: left;
    color: #456580;
}

.data td {
    padding: 18px 24px 22px;
    border-bottom: 2px solid #e0e7f0;
}

.data tr:last-child td {
    border-bottom: 0;
}

.bone {
    display: block;
    width: 128px;
    height: 24px;
    border-radius: 8px;
    background-color: #f0f3f8;
}

/* properties */
.props {
    flex: none;
    width: 576px;
    padding: 8px 0 0 24px;
    overflow: hidden;
    border-left: 2px solid #d5dde3;
    font-size: 24px;
}

.prop-tabs {
    display: flex;
    gap: 8px;
    padding-bottom: 16px;
}

.prop-tabs button {
    height: 50px;
    padding: 0 16px;
    border-radius: 8px;
}

.prop-tabs .active {
    background-color: #eff0f4;
    color: #0c2230;
}

.group {
    display: flex;
    flex-direction: column;
    gap: 8px;
    padding: 24px 0 8px;
    border-top: 2px solid #d5dde3;
}

.prop-tabs + .group {
    padding-top: 8px;
}

.group h4 {
    display: flex;
    align-items: center;
    gap: 8px;
    height: 32px;
    margin-bottom: 4px;
}

.group .with-info {
    height: 34px;
}

.info {
    display: flex;
    align-items: center;
    justify-content: center;
    width: 28px;
    height: 28px;
    border: 2px solid #d5dde3;
}

.info .icon {
    width: 20px;
    height: 20px;
}

.with-info .info {
    margin-left: auto;
}

.field-label {
    font-weight: 500;
    line-height: 32px;
    color: #0c2230;
}

.field-input {
    width: 100%;
    height: 64px;
    padding: 2px 24px 0;
    border: 2px solid #d5dde3;
    border-radius: 12px;
    background-color: #fff;
    font-size: 28px;
    color: #0c2230;
}

.hint {
    font-size: 22px;
    line-height: 34px;
}

.note {
    margin-bottom: 4px;
    font-size: 22px;
    line-height: 28px;
    white-space: nowrap;
}

.adders {
    display: flex;
    gap: 16px;
}

.adders button {
    line-height: 32px;
    color: #93cbc3;
}

.adders-solo {
    padding: 12px 0 4px;
}

.field {
    display: grid;
    grid-template-columns: 232px 1fr auto;
    column-gap: 12px;
    align-items: center;
    white-space: nowrap;
}

.field-toggle {
    height: 38px;
}

.label-info {
    display: flex;
    align-items: center;
    gap: 8px;
}

.select {
    position: relative;
    grid-column: 2 / 4;
}

.select select {
    display: block;
    width: 100%;
    height: 56px;
    padding: 0 10px;
    border: 2px solid #d5dde3;
    border-radius: 8px;
    background-color: #fff;
    color: #0c2230;
    appearance: none;
}

.select .icon {
    position: absolute;
    top: 14px;
    right: 20px;
    pointer-events: none;
}

.select-lg select {
    height: 64px;
    padding: 0 16px;
    font-size: 28px;
    color: #1e3a47;
}

.select-lg .icon {
    top: 18px;
    color: #8b979f;
}

.toggle {
    grid-column: 3;
    width: 64px;
    height: 36px;
    margin: 0;
    border: 2px solid #d5dde3;
    background: linear-gradient(to right, #fff 32px, #d5dde3 32px);
    appearance: none;
}

.color {
    display: flex;
    grid-column: 3;
    align-items: center;
    gap: 8px;
    height: 50px;
    padding: 0 8px;
    border: 2px solid #d5dde3;
    border-radius: 8px;
    font-size: 20px;
}

.swatch {
    width: 32px;
    height: 32px;
    border: 2px solid #d5dde3;
    border-radius: 8px;
}

.asset {
    display: flex;
    align-items: center;
    justify-content: center;
    width: 80px;
    height: 64px;
    border: 2px solid #d5dde3;
    border-radius: 12px;
    background-color: #fff;
}

.mark {
    width: 12px;
    height: 12px;
    border: 2px solid #d5dde3;
}

.more {
    width: 56px;
    height: 56px;
    border: 2px solid #d5dde3;
    border-radius: 8px;
}
```
